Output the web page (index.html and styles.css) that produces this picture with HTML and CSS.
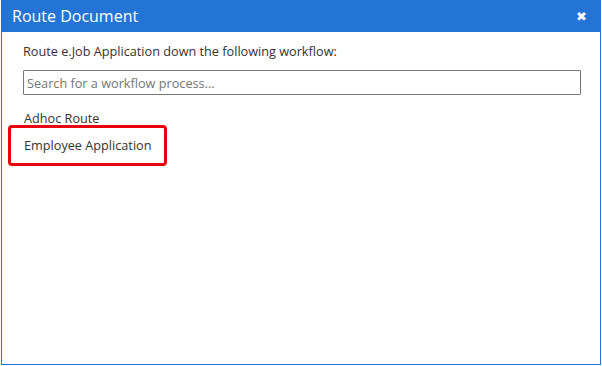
FILE: index.html
```html
<!DOCTYPE html>
<html lang="en">
<head>
    <meta charset="UTF-8">
    <title>Route Document</title>
    <link rel="stylesheet" href="styles.css">
</head>
<body>
    <div class="dialog">
        <div class="dialog-header">
            <h1 class="dialog-title">Route Document</h1>
            <span class="dialog-close">&#x2716;</span>
        </div>
        <div class="dialog-body">
            <p class="intro">Route e.Job Application down the following workflow:</p>
            <input type="text" class="search" placeholder="Search for a workflow process...">
            <ul class="workflow-list">
                <li>Adhoc Route</li>
                <li class="highlighted">Employee Application</li>
            </ul>
        </div>
    </div>
</body>
</html>
```

FILE: styles.css
```css
* {
    margin: 0;
    padding: 0;
    box-sizing: border-box;
    font-family: 'Open Sans', 'Noto Sans', sans-serif;
}

body {
    background-color: #ffffff;
    padding-left: 1px;
}

.dialog {
    width: 600px;
    height: 365px;
    border: 1px solid #2474d6;
    border-top: none;
    background: white;
}

.dialog-header {
    background-color: #2474d6;
    height: 32px;
    margin: 0 -1px;
    display: flex;
    align-items: center;
    justify-content: space-between;
    padding: 0 14px 0 11px;
}

.dialog-title {
    color: white;
    font-size: 16px;
    font-weight: 400;
}

.dialog-close {
    color: white;
    font-size: 13px;
    font-family: 'DejaVu Sans', sans-serif;
}

.dialog-body {
    padding: 10px 20px 0 21px;
}

.intro {
    color: #333;
    font-size: 12.7px;
    line-height: 18px;
    margin-bottom: 10px;
}

.search {
    width: 558px;
    height: 25px;
    border: 1px solid #767676;
    border-radius: 1px;
    padding: 0 3px;
    font-size: 12.7px;
    color: #333;
}

.search::placeholder {
    color: #757575;
}

.workflow-list {
    list-style: none;
    margin-top: 14px;
    padding-left: 1px;
}

.workflow-list li {
    color: #333;
    font-size: 12.7px;
    line-height: 18px;
    margin-bottom: 9px;
}

.highlighted {
    position: relative;
}

.highlighted::after {
    content: '';
    box-sizing: border-box;
    position: absolute;
    left: -16px;
    top: -11px;
    width: 159px;
    height: 41px;
    border: 3px solid #e8000b;
    border-radius: 4px;
}
```
